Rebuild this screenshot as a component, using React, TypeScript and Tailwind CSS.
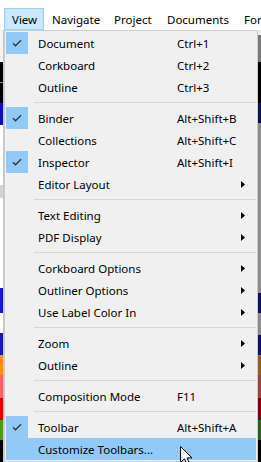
import React from "react";

type Item =
  | { sep: true }
  | { sep?: false; label: string; key?: string; checked?: boolean; sub?: boolean; hot?: boolean };

const items: Item[] = [
  { label: "Document", key: "Ctrl+1", checked: true },
  { label: "Corkboard", key: "Ctrl+2" },
  { label: "Outline", key: "Ctrl+3" },
  { sep: true },
  { label: "Binder", key: "Alt+Shift+B", checked: true },
  { label: "Collections", key: "Alt+Shift+C" },
  { label: "Inspector", key: "Alt+Shift+I", checked: true },
  { label: "Editor Layout", sub: true },
  { sep: true },
  { label: "Text Editing", sub: true },
  { label: "PDF Display", sub: true },
  { sep: true },
  { label: "Corkboard Options", sub: true },
  { label: "Outliner Options", sub: true },
  { label: "Use Label Color In", sub: true },
  { sep: true },
  { label: "Zoom", sub: true },
  { label: "Outline", sub: true },
  { sep: true },
  { label: "Composition Mode", key: "F11" },
  { sep: true },
  { label: "Toolbar", key: "Alt+Shift+A", checked: true },
  { label: "Customize Toolbars...", hot: true },
];

const menus = [
  { label: "View", w: "w-[40px]", active: true },
  { label: "Navigate", w: "w-[62px]" },
  { label: "Project", w: "w-[53px]" },
  { label: "Documents", w: "w-[77px]" },
  { label: "Format", w: "w-[60px]" },
];

function Check() {
  return (
    <svg width="12" height="10" viewBox="0 0 12 10">
      <path d="M2 5.3 L4.5 7.8 L10 2.3" fill="none" stroke="#333" strokeWidth="1.3" />
    </svg>
  );
}

function Arrow() {
  return (
    <svg width="4" height="7" viewBox="0 0 4 7">
      <path d="M0 0 L4 3.5 L0 7 Z" fill="#000" />
    </svg>
  );
}

export default function App() {
  return (
    <div
      className="relative h-[462px] w-[261px] overflow-hidden bg-white text-black"
      style={{ fontFamily: '"Noto Sans", "Liberation Sans", sans-serif' }}
    >
      {/* menu bar, last item runs off the window edge */}
      <div className="flex h-[30px] items-end whitespace-nowrap bg-white pl-[4px] text-[11.5px]">
        {menus.map((m) => (
          <div
            key={m.label}
            className={`flex h-[22px] shrink-0 items-center border px-[7px] pt-[2px] ${m.w} ${
              m.active ? "border-[#99d1ff] bg-[#cce8ff]" : "border-transparent"
            }`}
          >
            {m.label}
          </div>
        ))}
      </div>

      <div className="flex">
        {/* app content peeking on the left */}
        <div className="flex w-[4px] flex-col border-r border-[#c8c8c8]">
          <div className="h-[32px] bg-[#f4f4f4]" />
          <div className="h-[20px] bg-black" />
          <div className="h-[1px] bg-[#888]" />
          <div className="h-[20px] bg-black" />
          <div className="h-[22px] bg-[#1010c0]" />
          <div className="h-[60px] bg-white" />
          <div className="h-[13px] bg-[#d4d4d4]" />
          <div className="h-[90px] bg-white" />
          <div className="h-[25px] bg-[#1818c8]" />
          <div className="h-[20px] bg-white" />
          <div className="h-[22px] bg-[#1a1ab0]" />
          <div className="h-[20px] bg-[#ff8c1a]" />
          <div className="h-[23px] bg-[#ff6464]" />
          <div className="h-[22px] bg-[#e00000]" />
          <div className="h-[20px] bg-[#4a9a1a]" />
          <div className="h-[22px] bg-black" />
        </div>

        {/* dropdown */}
        <div className="w-[254px] border border-[#cccccc] bg-[#f0f0f0] px-[1px] pt-[1px] text-[11.5px] whitespace-nowrap">
          {items.map((it, i) =>
            it.sep ? (
              <div key={i} className="h-[9px] pl-[28px] pt-[4px]">
                <div className="h-[1px] bg-[#d7d7d7]" />
              </div>
            ) : (
              <div
                key={i}
                className={`flex h-[22px] items-center ${it.hot ? "bg-[#91c9f7]" : ""}`}
              >
                <div
                  className={`flex h-[22px] w-[22px] shrink-0 items-center justify-center ${
                    it.checked ? "bg-[#91c9f7]" : ""
                  }`}
                >
                  {it.checked ? <Check /> : null}
                </div>
                <div className="ml-[10px] w-[139px] shrink-0 pt-[2px]">{it.label}</div>
                {it.key ? <div className="pt-[2px]">{it.key}</div> : null}
                {it.sub ? (
                  <div className="ml-auto mr-[11px] flex">
                    <Arrow />
                  </div>
                ) : null}
              </div>
            )
          )}
        </div>

        {/* app content peeking on the right */}
        <div className="flex w-[3px] flex-col">
          <div className="h-[5px] bg-[#e8e8e8]" />
          <div className="h-[27px] bg-[#7a7a7a]" />
          <div className="h-[41px] bg-black" />
          <div className="h-[20px] bg-[#101060]" />
          <div className="h-[170px] bg-[#8c8c8c]" />
          <div className="h-[20px] bg-[#101070]" />
          <div className="h-[22px] bg-[#8c8c8c]" />
          <div className="h-[20px] bg-[#101070]" />
          <div className="h-[20px] bg-[#a05c10]" />
          <div className="h-[23px] bg-[#a04040]" />
          <div className="h-[22px] bg-[#800000]" />
          <div className="h-[20px] bg-[#2a6010]" />
          <div className="h-[22px] bg-black" />
        </div>
      </div>

      {/* mouse pointer */}
      <svg
        className="absolute left-[180px] top-[446px]"
        width="13"
        height="20"
        viewBox="0 0 13 20"
      >
        <path
          d="M0.5 0.5 L0.5 16.5 L4.5 12.8 L7.2 18.8 L9.6 17.8 L7 11.9 L12 11.9 Z"
          fill="#fff"
          stroke="#000"
          strokeWidth="1"
        />
      </svg>
    </div>
  );
}
